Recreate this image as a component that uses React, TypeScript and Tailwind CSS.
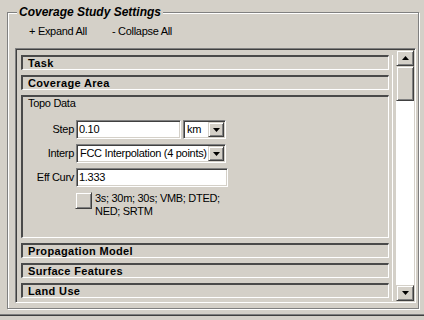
import type { ReactNode } from "react";

const raised =
  "border border-t-[#d4d0c8] border-l-[#d4d0c8] border-b-[#404040] border-r-[#404040] shadow-[inset_1px_1px_0_#fff,inset_-1px_-1px_0_#808080] bg-[#d4d0c8]";
const sunken =
  "border border-t-[#808080] border-l-[#808080] border-b-white border-r-white shadow-[inset_1px_1px_0_#404040,inset_-1px_-1px_0_#d4d0c8]";

function Arrow({ down }: { down?: boolean }) {
  return (
    <svg width="7" height="4" viewBox="0 0 7 4">
      <polygon points={down ? "0,0 7,0 3.5,4" : "0,4 7,4 3.5,0"} fill="#000" />
    </svg>
  );
}

function Header({ children }: { children: ReactNode }) {
  return (
    <div className="h-[15px] border-t-2 border-l-2 border-t-[#4a4a4a] border-l-[#4a4a4a] border-b border-r border-b-white border-r-white pl-[5px] text-[11px] leading-[12px] font-bold tracking-[0.35px] text-black">
      {children}
    </div>
  );
}

function TextBox({ value, width }: { value: string; width: string }) {
  return (
    <div className={`${sunken} ${width} h-[19px] bg-white p-[1px] pl-[2px] text-[11px] leading-[15px] text-black`}>
      {value}
    </div>
  );
}

function Select({ value, width }: { value: string; width: string }) {
  return (
    <div className={`${sunken} ${width} h-[19px] bg-white p-[1px] flex text-[11px] leading-[15px] text-black`}>
      <span className="flex-1 pl-[2px] whitespace-nowrap overflow-hidden">{value}</span>
      <div className={`${raised} w-[16px] h-[15px] flex items-center justify-center`}>
        <Arrow down />
      </div>
    </div>
  );
}

function Field({ label, children }: { label: string; children: ReactNode }) {
  return (
    <div className="flex items-center h-[19px]">
      <span className="w-[51px] text-right text-[11px]">{label}</span>
      <div className="ml-[2px] flex gap-[2px]">{children}</div>
    </div>
  );
}

export default function App() {
  return (
    <div className="w-[424px] h-[320px] bg-[#d4d0c8] overflow-hidden flex flex-col font-['Liberation_Sans',Arial,sans-serif] tracking-[-0.3px] text-black">
      {/* Group box */}
      <div className="ml-[7px] mt-[12px] w-[412px] h-[297px] border border-[#808080] shadow-[inset_1px_1px_0_#fff,1px_1px_0_#fff] flex flex-col">
        <div className="-mt-[8px] ml-[9px] px-[2px] w-fit bg-[#d4d0c8] text-[12px] leading-[15px] font-bold italic tracking-normal">
          Coverage Study Settings
        </div>
        <div className="mt-[4px] ml-[21px] flex text-[11px] leading-[14px]">
          <span className="w-[83px]">+ Expand All</span>
          <span>- Collapse All</span>
        </div>

        {/* Scrolling panel */}
        <div className={`${sunken} mt-[10px] ml-[7px] w-[401px] h-[255px] p-[1px] flex`}>
          <div className="flex-1 flex pl-[4px] pt-[5px]">
            <div className="w-[368px] flex flex-col gap-[5px]">
              <Header>Task</Header>
              <Header>Coverage Area</Header>
              <div className="h-[143px] border-t-2 border-l-2 border-t-[#4a4a4a] border-l-[#4a4a4a] border-b border-r border-b-white border-r-white flex flex-col">
                <div className="pl-[5px] text-[11px] leading-[12px]">Topo Data</div>
                <div className="mt-[11px] flex flex-col gap-[5px]">
                  <Field label="Step">
                    <TextBox value="0.10" width="w-[105px]" />
                    <Select value="km" width="w-[43px]" />
                  </Field>
                  <Field label="Interp">
                    <Select value="FCC Interpolation (4 points)" width="w-[150px]" />
                  </Field>
                  <Field label="Eff Curv">
                    <TextBox value="1.333" width="w-[152px]" />
                  </Field>
                  <div className="flex items-start ml-[52px]">
                    <div className={`${raised} w-[17px] h-[17px]`} />
                    <div className="ml-[3px] text-[11px] leading-[13px]">
                      3s; 30m; 30s; VMB; DTED;
                      <br />
                      NED; SRTM
                    </div>
                  </div>
                </div>
              </div>
              <Header>Propagation Model</Header>
              <Header>Surface Features</Header>
              <Header>Land Use</Header>
            </div>
            <div className="ml-[3px] w-px bg-white" />
          </div>

          {/* Scrollbar */}
          <div className="ml-[2px] w-[18px] flex flex-col">
            <div className={`${raised} h-[16px] flex items-center justify-center`}>
              <Arrow />
            </div>
            <div className={`${raised} h-[35px]`} />
            <div className="flex-1 bg-white" />
            <div className={`${raised} h-[16px] flex items-center justify-center`}>
              <Arrow down />
            </div>
          </div>
        </div>
      </div>
      <div className="mt-[5px] h-px bg-[#808080]" />
      <div className="h-px bg-[#404040]" />
    </div>
  );
}
